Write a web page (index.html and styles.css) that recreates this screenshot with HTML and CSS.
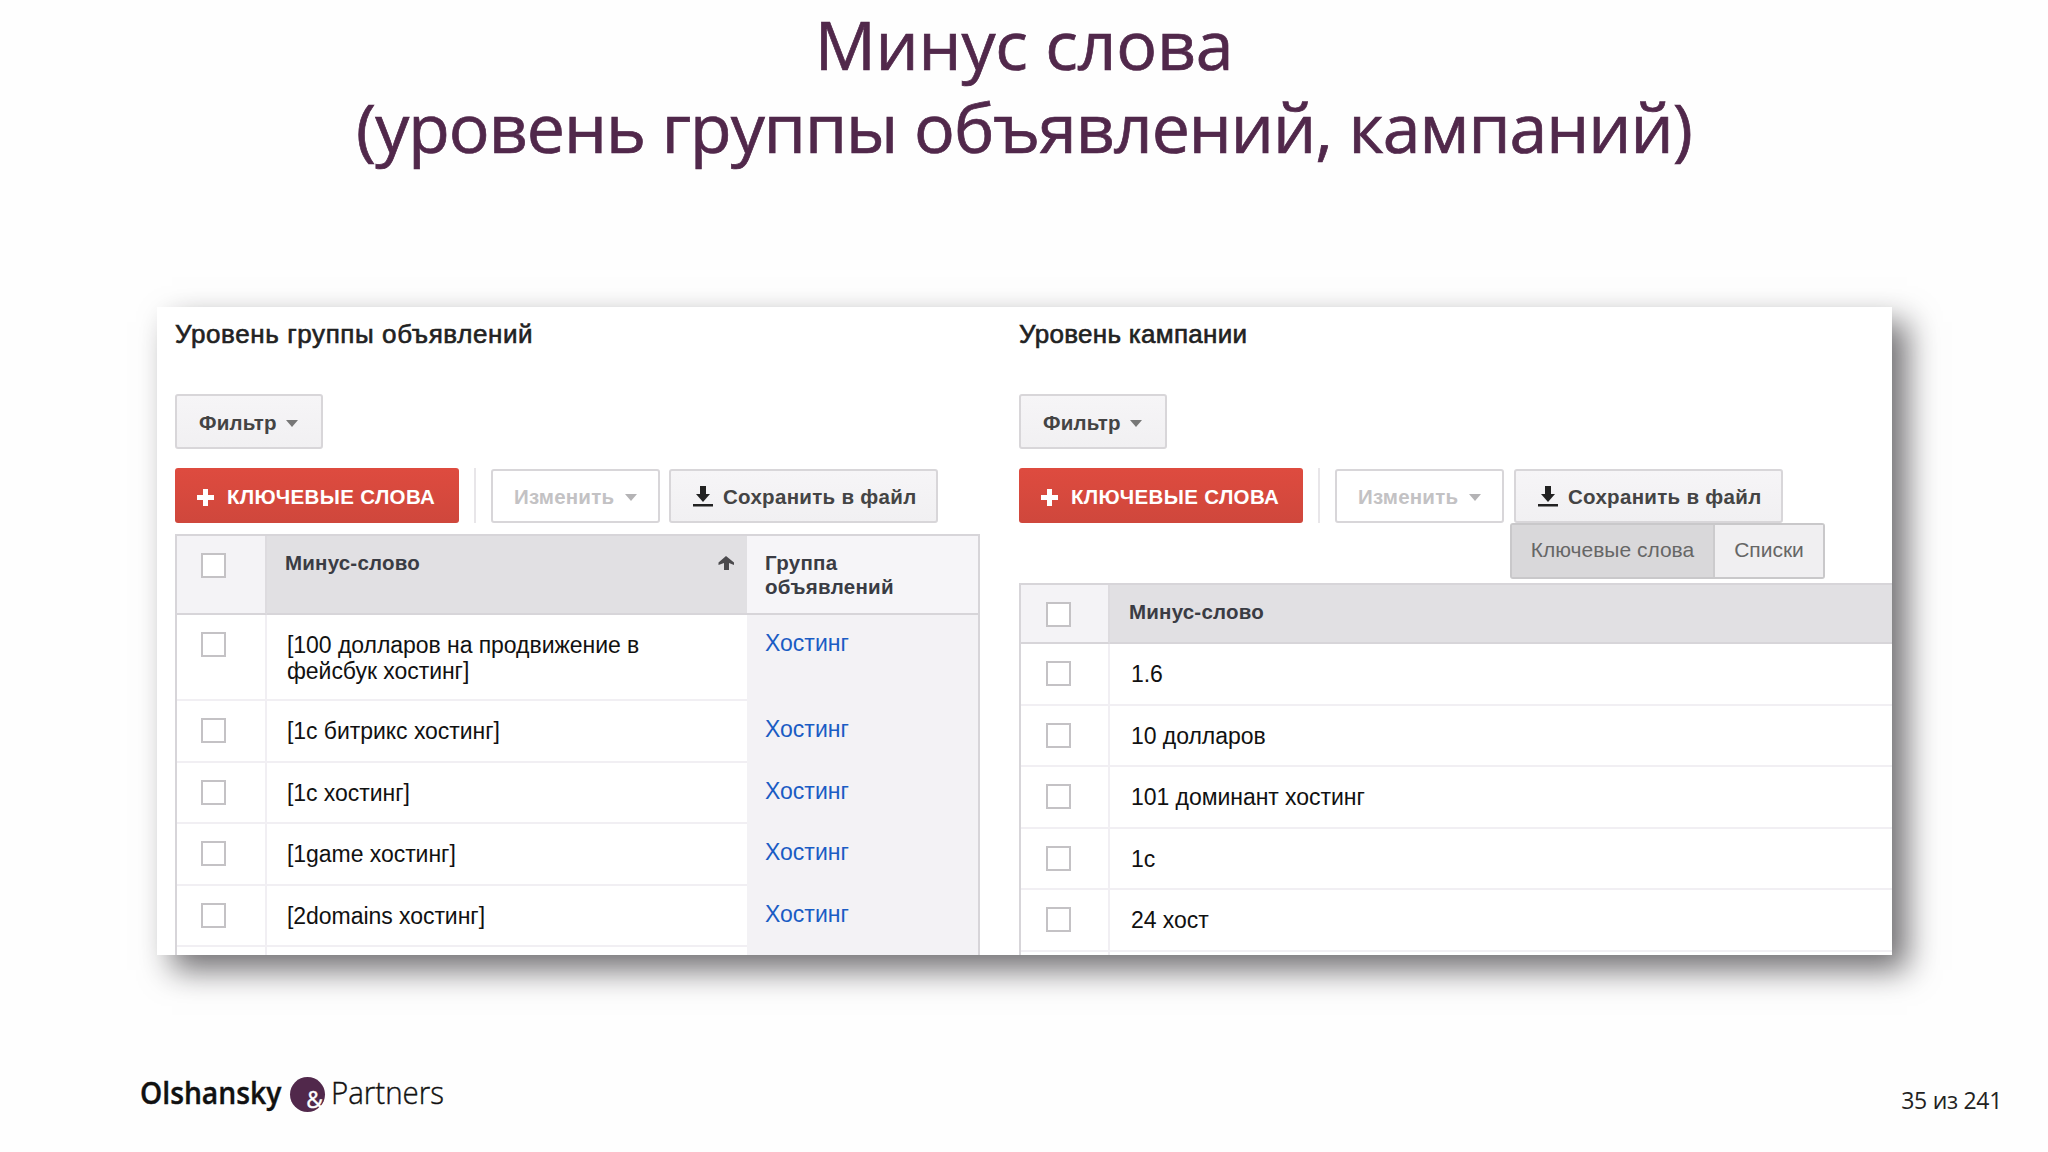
FILE: index.html
```html
<!DOCTYPE html>
<html lang="ru">
<head>
  <meta charset="utf-8"/>
  <title>Минус слова</title>
  <link rel="stylesheet" href="styles.css">
</head>
<body>
  <main class="slide">
    <h1 class="title"><span class="title-top">Минус слова</span><span class="title-bottom">(уровень группы объявлений, кампаний)</span></h1>
    <div class="shot">
      <section class="level">
        <h2>Уровень группы объявлений</h2>
        <button class="btn filter">Фильтр<i class="caret"></i></button>
        <div class="actions">
          <button class="btn add"><svg width="17" height="17" viewBox="0 0 17 17"><path d="M6 0h5v6h6v5h-6v6h-5v-6h-6v-5h6z" fill="#fff"/></svg>КЛЮЧЕВЫЕ СЛОВА</button>
          <i class="sep"></i>
          <button class="btn edit">Изменить<i class="caret"></i></button>
          <button class="btn save"><svg width="20" height="21" viewBox="0 0 20 21"><path d="M7 0h6v8h4l-7 8-7-8h4zM0 18h20v2.500h-20z" fill="#222"/></svg>Сохранить в файл</button>
        </div>
        <div class="table groups">
          <div class="row head">
            <div class="check"><i class="box"></i></div>
            <div class="word">Минус-слово<svg class="sort" width="16" height="14" viewBox="0 0 16 14"><path d="M8 0l8 6.500v2.500l-5-2v7h-5v-7l-5.500 2v-2.500z" fill="#4b4a4d"/></svg></div>
            <div class="group">Группа<br/>объявлений</div>
          </div>
          <div class="row tall"><div class="check"><i class="box"></i></div><div class="word">[100 долларов на продвижение в<br/>фейсбук хостинг]</div><div class="group"><a>Хостинг</a></div></div>
          <div class="row"><div class="check"><i class="box"></i></div><div class="word">[1с битрикс хостинг]</div><div class="group"><a>Хостинг</a></div></div>
          <div class="row"><div class="check"><i class="box"></i></div><div class="word">[1с хостинг]</div><div class="group"><a>Хостинг</a></div></div>
          <div class="row"><div class="check"><i class="box"></i></div><div class="word">[1game хостинг]</div><div class="group"><a>Хостинг</a></div></div>
          <div class="row"><div class="check"><i class="box"></i></div><div class="word">[2domains хостинг]</div><div class="group"><a>Хостинг</a></div></div>
          <div class="row"><div class="check"></div><div class="word"></div><div class="group"></div></div>
        </div>
      </section>
      <section class="level campaign">
        <h2>Уровень кампании</h2>
        <button class="btn filter">Фильтр<i class="caret"></i></button>
        <div class="actions">
          <button class="btn add"><svg width="17" height="17" viewBox="0 0 17 17"><path d="M6 0h5v6h6v5h-6v6h-5v-6h-6v-5h6z" fill="#fff"/></svg>КЛЮЧЕВЫЕ СЛОВА</button>
          <i class="sep"></i>
          <button class="btn edit">Изменить<i class="caret"></i></button>
          <button class="btn save"><svg width="20" height="21" viewBox="0 0 20 21"><path d="M7 0h6v8h4l-7 8-7-8h4zM0 18h20v2.500h-20z" fill="#222"/></svg>Сохранить в файл</button>
        </div>
        <div class="toggle"><button class="active">Ключевые слова</button><button>Списки</button></div>
        <div class="table campaigns">
          <div class="row head"><div class="check"><i class="box"></i></div><div class="word">Минус-слово</div></div>
          <div class="row"><div class="check"><i class="box"></i></div><div class="word">1.6</div></div>
          <div class="row"><div class="check"><i class="box"></i></div><div class="word">10 долларов</div></div>
          <div class="row"><div class="check"><i class="box"></i></div><div class="word">101 доминант хостинг</div></div>
          <div class="row"><div class="check"><i class="box"></i></div><div class="word">1с</div></div>
          <div class="row"><div class="check"><i class="box"></i></div><div class="word">24 хост</div></div>
          <div class="row"><div class="check"></div><div class="word"></div></div>
        </div>
      </section>
    </div>
    <footer>
      <div class="logo"><b>Olshansky</b><i class="amp">&amp;</i><span class="partners">Partners</span></div>
      <div class="page">35 из 241</div>
    </footer>
  </main>
</body>
</html>
```
FILE: styles.css
```css
* { box-sizing: border-box; }
body { margin: 0; background: #fefefe; font-family: "Liberation Sans", Arial, sans-serif; }
h1, h2, button { margin: 0; padding: 0; font-weight: 400; }
button { font-family: inherit; }
.slide { width: 2048px; height: 1152px; overflow: hidden; display: flex; flex-direction: column; }

.title { height: 307px; padding-top: 2px; display: flex; flex-direction: column; align-items: center; color: #51284b; font-family: "Open Sans", "Noto Sans", sans-serif; font-size: 68px; line-height: 83px; white-space: nowrap; -webkit-text-stroke: 0.7px #51284b; }
.title-top { letter-spacing: -0.2px; }
.title-bottom { letter-spacing: -1px; }

.shot { width: 1735px; height: 648px; margin-left: 157px; padding: 12px 0 0 18px; display: grid; grid-template-columns: 844px 1fr; overflow: hidden; background: #fff; box-shadow: 15px 15px 30px rgba(20, 16, 22, 0.6); flex: none; }
.level { min-width: 0; }
h2 { font-size: 26px; line-height: 30px; letter-spacing: 0.6px; color: #222; -webkit-text-stroke: 0.6px #222; margin-bottom: 45px; }
.campaign h2 { letter-spacing: 0.3px; }

.btn { display: flex; align-items: center; height: 54px; border: 2px solid #d8d6d9; border-radius: 3px; background: linear-gradient(#f6f5f7, #f1f0f2); color: #444; font-size: 20.5px; font-weight: 700; letter-spacing: 0.2px; white-space: nowrap; padding-top: 2px; }
.caret { border: 6.5px solid transparent; border-top: 7px solid #777; border-bottom: 0; margin-top: 2px; }
.filter { width: 148px; height: 55px; padding-left: 22px; gap: 9px; margin-bottom: 19px; }
.actions { display: flex; align-items: center; height: 55px; }
.add { width: 284px; height: 55px; border: 0; background: linear-gradient(#de4b3f, #cf473c); color: #fff; padding: 3px 0 0 22px; gap: 13px; letter-spacing: 0.35px; }
.sep { width: 2px; height: 55px; margin: 0 15px; background: #e8e6e9; }
.edit { width: 169px; padding-left: 21px; gap: 11px; background: #fff; color: #c3c2c4; margin-right: 9px; }
.edit .caret { border-top-color: #b4b3b5; }
.save { width: 269px; padding-left: 22px; gap: 10px; letter-spacing: 0.3px; }
.campaign .edit { margin-right: 10px; }

.toggle { display: flex; width: 315px; height: 56px; margin: 0 0 4px 491px; border: 2px solid #c9c8ca; border-radius: 3px; }
.toggle button { flex: 1; border: 0; padding-bottom: 2px; background: #f0eff1; color: #666; font-size: 21px; white-space: nowrap; }
.toggle .active { flex: none; width: 203px; background: #d9d8da; border-right: 2px solid #cccbcd; }

.table { border: 2px solid #d7d5d9; border-bottom: 0; font-size: 23px; line-height: 26px; color: #111; }
.groups { width: 805px; margin-top: 11px; }
.campaigns { border-right: 0; }
.row { display: grid; grid-template-columns: 89px 1fr; height: 61.5px; }
.groups .row { grid-template-columns: 90px 480px 1fr; }
.row > div { padding-top: 17px; border-bottom: 2px solid #f1eff3; white-space: nowrap; }
.row > .check { padding-left: 24px; border-right: 2px solid #f1eff3; }
.campaigns .row > .check { padding-left: 25px; }
.row > .word { padding-left: 21px; letter-spacing: -0.05px; }
.groups .row > .word { padding-left: 20px; }
.row > .group { padding: 15px 0 0 18px; background: #f3f2f5; border-bottom-color: #f3f2f5; }
.row a { color: #1a5cc4; }
.row.tall { height: 86px; }
.box { display: block; width: 25px; height: 25px; border: 2px solid #c4c2c5; background: #fff; }
.row.head { height: 59px; font-size: 20.5px; line-height: 23.5px; font-weight: 700; color: #3a3c44; }
.groups .row.head { height: 79px; }
.row.head > div { padding-top: 15px; border-bottom-color: #d7d5d9; }
.row.head > .check { padding-top: 17px; background: #f4f3f6; border-right-color: #dddbdf; }
.table .row.head > .word { display: flex; justify-content: space-between; padding-left: 19px; background: #e1e0e3; letter-spacing: 0.2px; }
.groups .row.head > .word { padding-left: 18px; }
.row.head > .group { background: #f6f5f8; letter-spacing: 0.3px; }
.sort { margin: 5px 13px 0 0; }

footer { display: flex; justify-content: space-between; padding: 120px 46px 0 140px; }
.logo { display: flex; align-items: center; height: 38px; font-family: "Open Sans", "Noto Sans", sans-serif; font-size: 31px; line-height: 34px; color: #111; }
.logo b { width: 150px; font-weight: 600; transform: scaleX(0.912); transform-origin: left; margin-top: -4px; -webkit-text-stroke: 0.4px #111; }
.amp { width: 35px; height: 35px; padding: 6px 2px 0 0; border-radius: 50%; background: #51284b; color: #fff; font-style: normal; font-size: 23px; text-align: right; line-height: 32px; -webkit-text-stroke: 0.4px #fff; }
.partners { font-weight: 300; margin: -4px 0 0 6px; transform: scaleX(0.95); transform-origin: left; -webkit-text-stroke: 0.4px #111; }
.page { padding-top: 9px; font-family: "Open Sans", "Noto Sans", sans-serif; font-size: 23px; letter-spacing: -0.3px; color: #222; }
```
